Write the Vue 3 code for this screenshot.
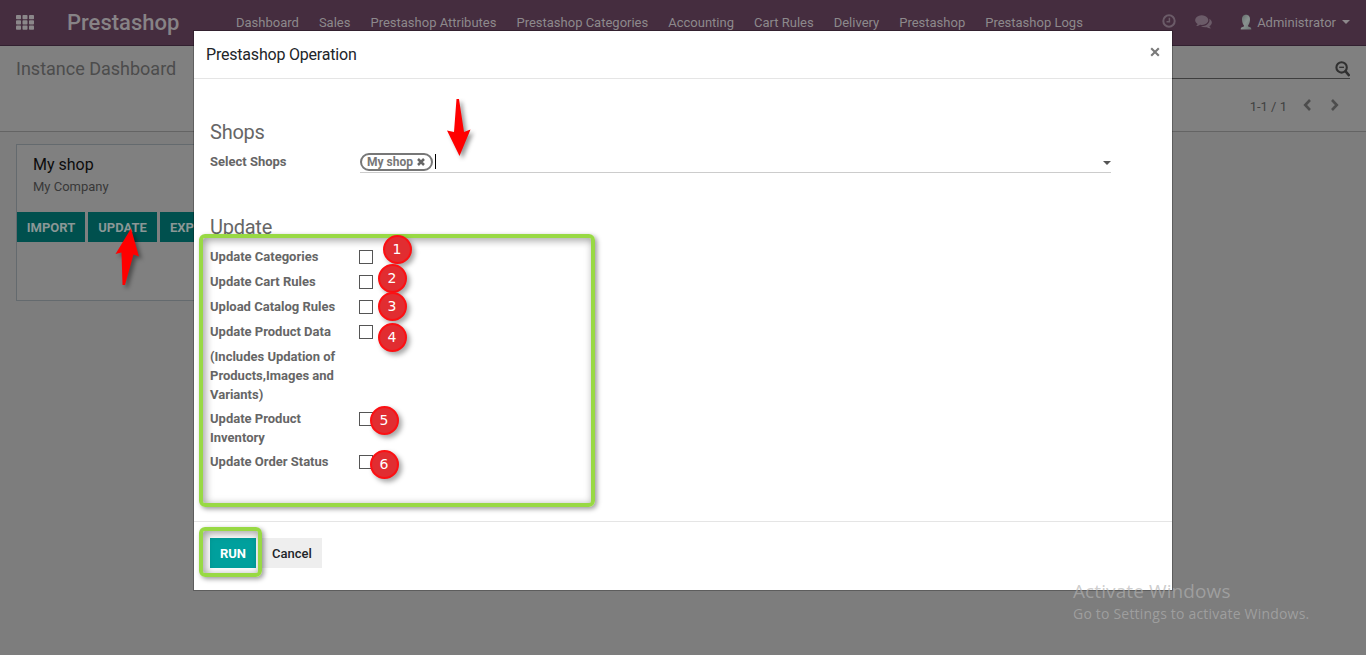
<script setup>
const menu = ['Dashboard', 'Sales', 'Prestashop Attributes', 'Prestashop Categories', 'Accounting', 'Cart Rules', 'Delivery', 'Prestashop', 'Prestashop Logs']
const tiles = [0, 6.5, 13].flatMap(x => [0, 5.3, 10.6].map(y => ({ x, y })))
const options = [
  { label: 'Update Categories', box: true },
  { label: 'Update Cart Rules', box: true },
  { label: 'Upload Catalog Rules', box: true },
  { label: 'Update Product Data', box: true },
  { label: '(Includes Updation of Products,Images and Variants)', box: false },
  { label: 'Update Product Inventory', box: true },
  { label: 'Update Order Status', box: true }
]
const marks = [
  { n: 1, x: 397, y: 249 },
  { n: 2, x: 392, y: 278 },
  { n: 3, x: 392, y: 306 },
  { n: 4, x: 392, y: 337 },
  { n: 5, x: 384, y: 420 },
  { n: 6, x: 384, y: 464 }
]
</script>

<template>
  <div class="screen">
    <header class="navbar">
      <svg class="apps" width="18" height="15" viewBox="0 0 18 15">
        <rect v-for="(t, i) in tiles" :key="i" :x="t.x" :y="t.y" width="5" height="4.2" rx=".8" />
      </svg>
      <div class="brand">Prestashop</div>
      <nav><a v-for="m in menu" :key="m">{{ m }}</a></nav>
      <div class="tray">
        <svg class="clock" width="14" height="14" viewBox="0 0 14 14">
          <circle cx="7" cy="7" r="5.7" fill="none" stroke="currentColor" stroke-width="2" />
          <path d="M7.4 3.700v4H4.500" fill="none" stroke="currentColor" stroke-width="1.500" />
        </svg>
        <svg class="chat" width="17" height="14" viewBox="0 0 1792 1500" fill="currentColor">
          <path d="M1408 640q0 139-94 257t-256.500 186.500-353.500 68.500q-86 0-176-16-124 88-278 128-36 9-86 16h-3q-11 0-20.500-8t-11.500-21q-1-3-1-6.500t.5-6.500 2-6l2.500-5 3.500-5.500 4-5 4.500-5 4-4.500q5-6 23-25t26-29.500 22.500-29 25-38.500 20.500-44q-124-72-195-177t-71-224q0-139 94-257t256.500-186.500 353.500-68.500 353.500 68.500 256.500 186.500 94 257zm384 256q0 120-71 224.500t-195 176.500q10 24 20.500 44t25 38.500 22.500 29 26 29.500 23 25q1 1 4 4.500t4.500 5 4 5 3.500 5.500l2.500 5 2 6 .5 6.500-1 6.500q-3 14-13 22t-22 7q-50-7-86-16-154-40-278-128-90 16-176 16-271 0-472-132 58 4 88 4 161 0 309-45t264-129q125-92 192-212t67-254q0-77-23-152 129 71 204 178t75 230z" transform="translate(0 -90)" />
        </svg>
        <svg class="avatar" width="12" height="16" viewBox="0 0 12 16">
          <defs>
            <linearGradient id="skin" x1="0" x2="1" y1="0" y2="1"><stop offset="0" stop-color="#5f6a68" /><stop offset=".5" stop-color="#899290" /><stop offset="1" stop-color="#6b7573" /></linearGradient>
          </defs>
          <path fill="url(#skin)" d="M6 .7c2.900 0 4.200 2.200 4 5.200-.2 2.500-1 4.300-1.900 5.300v1.300l2.600 1c.5.500.6 1.300.6 1.900H.7c0-.6.100-1.400.6-1.900l2.600-1v-1.300C3 10.200 2.200 8.400 2 5.900 1.800 2.900 3.100.7 6 .7Z" />
        </svg>
        <span>Administrator</span>
        <i class="caret"></i>
      </div>
    </header>

    <section class="panel">
      <div class="crumb">Instance Dashboard</div>
      <div class="search">
        <div class="field">
          <svg width="16" height="16" viewBox="0 0 16 16" fill="none" stroke="#303030">
            <circle cx="7.600" cy="6.400" r="5.200" stroke-width="2.100" />
            <path d="m11.600 10.400 3.200 3.700" stroke-width="2.500" stroke-linecap="round" />
            <path d="M5.200 6.300h4.800" stroke-width="1.300" />
          </svg>
        </div>
        <div class="pager">
          <span>1-1 / 1</span>
          <svg width="9" height="12" viewBox="0 0 9 12"><path d="M7 1 2.200 6 7 11" /></svg>
          <svg width="9" height="12" viewBox="0 0 9 12"><path d="M2 1l4.800 5L2 11" /></svg>
        </div>
      </div>
    </section>

    <main class="content">
      <article class="card">
        <h3>My shop</h3>
        <p>My Company</p>
        <div class="actions"><b class="b1">IMPORT</b><b class="b2">UPDATE</b><b class="b3">EXPORT</b></div>
      </article>
    </main>

    <div class="dialog">
      <div class="dhead">
        <span>Prestashop Operation</span>
        <svg width="10" height="10" viewBox="0 0 10 10"><path d="M1.200 1.200l7.600 7.600M8.800 1.200 1.200 8.800" stroke="#7a7a7a" stroke-width="2.100" /></svg>
      </div>
      <div class="dbody">
        <h2>Shops</h2>
        <div class="row first">
          <label>Select Shops</label>
          <div class="select">
            <span class="tag">My shop<svg width="8" height="8" viewBox="0 0 8 8"><path d="M1 1l6 6M7 1 1 7" stroke="#666" stroke-width="2.500" /></svg></span>
            <i class="cursor"></i>
            <i class="drop"></i>
          </div>
        </div>
        <h2 class="second">Update</h2>
        <div v-for="o in options" :key="o.label" class="row">
          <label>{{ o.label }}</label>
          <i v-if="o.box" class="check"></i>
        </div>
      </div>
      <div class="dfoot"><button class="run">RUN</button><button class="cancel">Cancel</button></div>
    </div>

    <div class="frame options-frame"></div>
    <div class="frame run-frame"></div>
    <div v-for="m in marks" :key="m.n" class="mark" :style="{ left: m.x - 14 + 'px', top: m.y - 14 + 'px' }">{{ m.n }}</div>
    <svg class="arrows" width="1366" height="655">
      <polygon points="456.500,99 459,99 464,132 470.500,129.500 459.500,156 447,130.500 454,132" />
      <polygon points="131,228.500 139,256.500 133.500,254.500 125,285 122.500,285 121.500,252.500 115.500,254" />
    </svg>
    <div class="watermark"><div>Activate Windows</div><p>Go to Settings to activate Windows.</p></div>
  </div>
</template>

<style>
body { margin: 0; overflow: hidden; background: #7d7d7d; }
</style>

<style scoped>
* { box-sizing: border-box; }
.screen { position: relative; width: 1366px; height: 655px; overflow: hidden; background: #7d7d7d; font: 13px/19px Roboto, "Liberation Sans", sans-serif; color: #333; }
.navbar { height: 46px; background: #452d3f; border-bottom: 1px solid #322030; display: flex; align-items: center; color: #8d898c; padding: 0 16px; }
.apps { fill: #8b878a; margin-top: -1px; }
.brand { margin-left: 33px; width: 169px; font-size: 22px; font-weight: 500; line-height: 44px; color: #878386; }
nav { display: flex; gap: 20px; white-space: nowrap; }
.tray { display: flex; align-items: center; margin-left: auto; white-space: nowrap; }
.clock { color: #6b5b68; margin: -3px 19px 0 0; }
.chat { color: #6b5b68; margin: -2px 28px 0 0; }
.avatar { margin: -1px 5px 0 0; }
.caret { border: 4px solid transparent; border-top-color: #8d898c; border-bottom: 0; margin: -1px 0 0 6px; }
.panel { height: 86px; background: #808080; border-bottom: 1px solid #646464; padding: 0 16px; display: flex; justify-content: space-between; }
.crumb { font-size: 18px; line-height: 46px; color: #4c4c4c; }
.search { width: 667px; }
.field { height: 33px; border-bottom: 1px solid #3e3e3e; display: flex; justify-content: flex-end; padding-top: 15px; }
.pager { display: flex; align-items: center; justify-content: flex-end; height: 55px; padding-right: 11px; color: #404040; }
.pager svg { fill: none; stroke: #4d4d4d; stroke-width: 2.600; margin: -3px 0 0 18px; }
.pager span + svg { margin-left: 16px; }
.content { padding: 12px 16px; }
.card { width: 320px; height: 157px; border: 1px solid #646a6e; background: #808080; }
.card h3 { margin: 10px 0 0 16px; font-size: 16px; font-weight: 400; line-height: 20px; color: #0c0c0c; }
.card p { margin: 2px 0 0 16px; color: #383838; }
.actions { display: flex; gap: 3px; margin-top: 16px; }
.actions b { height: 30px; background: #00504e; color: #8b9796; line-height: 32px; text-align: center; font-weight: 700; }
.b1 { width: 68px; }
.b2 { width: 69px; }
.b3 { width: 69px; }
.dialog { position: absolute; left: 194px; top: 31px; width: 978px; height: 559px; background: #fff; box-shadow: 0 0 0 1px rgba(0, 0, 0, .25); display: flex; flex-direction: column; }
.dhead { height: 48px; border-bottom: 1px solid #e5e5e5; display: flex; justify-content: space-between; padding: 0 12px; font-size: 16px; line-height: 47px; color: #212529; letter-spacing: -.2px; }
.dhead svg { margin-top: 16px; }
.dbody { flex: 1; padding: 42px 16px 0; color: #666; }
h2 { margin: 0 0 8px; font-size: 20px; font-weight: 400; line-height: 23px; color: #666; letter-spacing: -.25px; }
h2.second { margin: 43px 0 8px; }
.row { display: flex; align-items: flex-start; margin-bottom: 6px; }
.row:nth-of-type(n+6) { margin-bottom: 5px; }
.row label { width: 149px; padding-right: 22px; font-weight: 700; line-height: 19px; }
.first { height: 21px; margin: 0; }
.select { width: 751px; height: 21px; margin-left: 1px; border-bottom: 1px solid #ccc; display: flex; align-items: flex-start; }
.tag { width: 73px; height: 18px; margin-top: 1px; border: 2px solid #777; border-radius: 9px; font-size: 12px; font-weight: 700; line-height: 14px; padding-left: 5px; display: flex; align-items: center; color: #777; }
.tag svg { margin-left: 4px; }
.cursor { width: 1px; height: 15px; margin: 2px 0 0 2px; background: #000; }
.drop { margin: 9px 0 0 auto; border: 4px solid transparent; border-top-color: #555; border-bottom: 0; }
.check { width: 14px; height: 14px; margin-top: 3px; border: 1px solid #555; background: #fff; }
.dfoot { height: 69px; border-top: 1px solid #e5e5e5; padding: 16px; display: flex; gap: 6px; }
button { height: 30px; padding: 2px 0 0; border: 0; font: 500 13px/28px Roboto, sans-serif; }
.run { width: 46px; background: #00a09d; color: #fff; font-weight: 700; }
.cancel { width: 60px; background: #eee; color: #212529; font-weight: 500; }
.frame { position: absolute; border: 4px solid #98d944; border-radius: 6px; box-shadow: 2px 2px 5px rgba(0, 0, 0, .4), inset 2px 2px 8px rgba(0, 0, 0, .4); }
.options-frame { left: 199px; top: 234px; width: 396px; height: 273px; }
.run-frame { left: 199px; top: 527px; width: 63px; height: 50px; }
.mark { position: absolute; width: 29px; height: 29px; border: 2px solid #fc1013; border-radius: 50%; background: #e12d31; box-shadow: 3px 3px 5px rgba(0, 0, 0, .35); color: #fff; font: 14px/24px "DejaVu Sans", sans-serif; text-align: center; padding-right: 1px; }
.arrows { position: absolute; left: 0; top: 0; fill: #f00; filter: drop-shadow(3px 3px 2px rgba(0, 0, 0, .4)); }
.watermark { position: absolute; left: 1073px; top: 579px; font-family: "Open Sans", sans-serif; color: rgba(178, 178, 178, .65); white-space: nowrap; }
.watermark div { font-size: 19px; line-height: 24px; letter-spacing: .1px; }
.watermark p { margin: 0; font-size: 14px; line-height: 21px; letter-spacing: .2px; }
</style>
